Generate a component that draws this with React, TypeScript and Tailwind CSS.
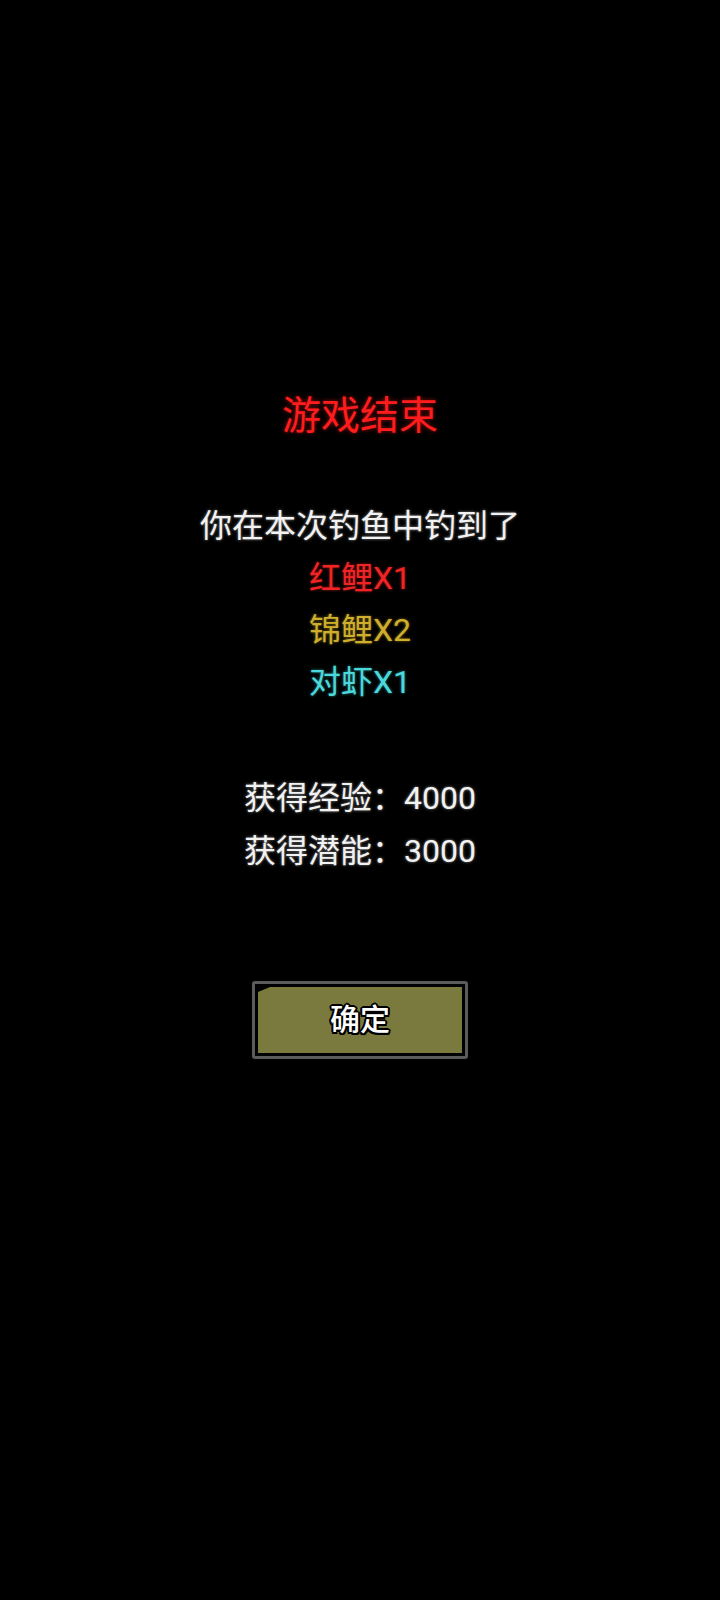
import React from 'react';

interface Catch {
    name: string;
    color: string;
}

const catches: Catch[] = [
    { name: '红鲤X1', color: 'text-[#f02424] [text-shadow:0_0_3px_rgba(240,36,36,0.6)]' },
    { name: '锦鲤X2', color: 'text-[#cfae2c] [text-shadow:0_0_3px_rgba(207,174,44,0.6)]' },
    { name: '对虾X1', color: 'text-[#4ad8dc] [text-shadow:0_0_3px_rgba(74,216,220,0.6)]' },
];

export default function App() {
    return (
        <div className="min-h-[1600px] w-full bg-black font-['Roboto','Noto_Sans_CJK_SC',sans-serif] flex flex-col items-center pt-[391px]">
            {/* Title */}
            <h1 className="text-[39px] leading-[50px] text-[#ff1c1c] [text-shadow:0_0_4px_rgba(255,28,28,0.6)]">
                游戏结束
            </h1>

            {/* Catch list */}
            <div className="mt-[59px] flex flex-col items-center text-[32px] leading-[52px]">
                <p className="text-[#f2f2f2] [text-shadow:0_0_3px_rgba(255,255,255,0.55)]">你在本次钓鱼中钓到了</p>
                {catches.map((c) => (
                    <p key={c.name} className={c.color}>
                        {c.name}
                    </p>
                ))}
            </div>

            {/* Rewards */}
            <div className="mt-[64px] flex flex-col items-center text-[32px] leading-[53px] text-[#f2f2f2] [text-shadow:0_0_3px_rgba(255,255,255,0.55)]">
                <p>获得经验：4000</p>
                <p>获得潜能：3000</p>
            </div>

            {/* Confirm button */}
            <button className="mt-[103px] w-[216px] h-[78px] border-[3px] border-[#5b5b5b] rounded-[3px] bg-black p-[3px]">
                <div className="h-full w-full bg-[#7a7a3e] flex items-center justify-center [clip-path:polygon(12px_0,100%_0,100%_100%,0_100%,0_5px)]">
                    <span className="text-[30px] leading-none font-medium text-white [text-shadow:-2px_0_0_#000,2px_0_0_#000,0_-2px_0_#000,0_2px_0_#000,-1.5px_-1.5px_0_#000,1.5px_1.5px_0_#000,-1.5px_1.5px_0_#000,1.5px_-1.5px_0_#000]">
                        确定
                    </span>
                </div>
            </button>
        </div>
    );
}
